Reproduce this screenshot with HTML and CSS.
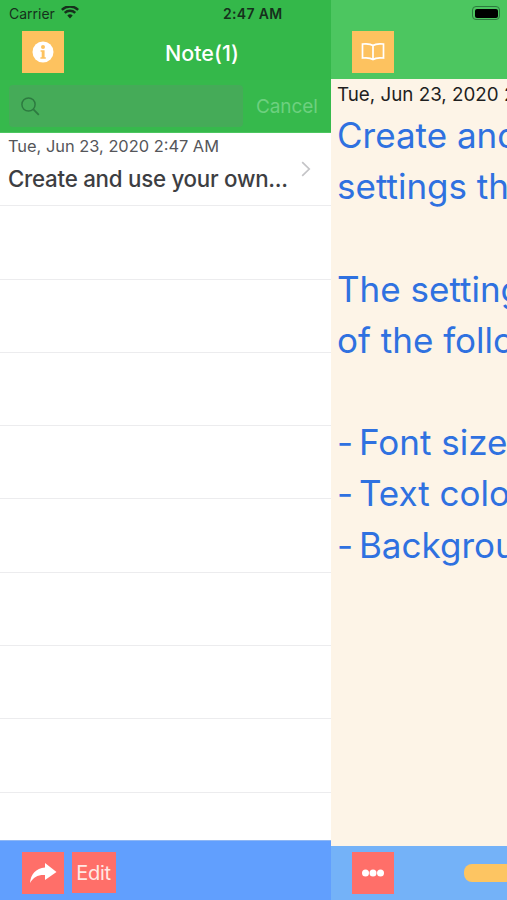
FILE: index.html
```html
<!DOCTYPE html>
<html lang="en">
<head>
<meta charset="utf-8">
<title>Note</title>
<link rel="stylesheet" href="styles.css">
</head>
<body>
<div class="screen">
  <section class="master">
    <header class="nav">
      <div class="status">
        <span class="carrier">Carrier</span>
        <svg class="wifi" viewBox="0 0 18 13" width="18" height="13"><path d="M9 12.6 6.3 9.6a3.9 3.9 0 0 1 5.4 0zM4.6 7.8 2.9 6a8.8 8.8 0 0 1 12.2 0l-1.7 1.8a6.4 6.4 0 0 0-8.8 0zM1.7 4.7 0 2.9a13 13 0 0 1 18 0l-1.7 1.8a10.6 10.6 0 0 0-14.6 0z" fill="#16301c"/></svg>
        <span class="clock">2:47 AM</span>
      </div>
      <div class="navbar">
        <button class="square amber">
          <svg viewBox="0 0 22 22" width="22" height="22"><circle cx="11" cy="11" r="10.5" fill="#fff"/><circle cx="11" cy="6" r="2" fill="#fdc25f"/><path d="M8.6 9.2h4v7h1.2v1.6H8.4v-1.6h1.3v-5.4H8.6z" fill="#fdc25f"/></svg>
        </button>
        <h1 class="title">Note(1)</h1>
      </div>
    </header>
    <div class="search">
      <div class="field">
        <svg viewBox="0 0 20 20" width="20" height="20"><circle cx="8.5" cy="8.5" r="6.6" fill="none" stroke="#2d7a40" stroke-width="1.5"/><path d="m13.4 13.4 5.4 5.4" stroke="#2d7a40" stroke-width="1.8" fill="none"/></svg>
      </div>
      <span class="cancel">Cancel</span>
    </div>
    <ul class="list">
      <li class="row">
        <div class="row-text">
          <div class="row-date">Tue, Jun 23, 2020 2:47 AM</div>
          <div class="row-title">Create and use your own...</div>
        </div>
        <svg class="chevron" viewBox="0 0 10 16" width="10" height="16"><path d="m1.2 1.2 7 6.8-7 6.8" fill="none" stroke="#c4c4c7" stroke-width="1.7"/></svg>
      </li>
      <li class="row"></li>
      <li class="row"></li>
      <li class="row"></li>
      <li class="row"></li>
      <li class="row"></li>
      <li class="row"></li>
      <li class="row"></li>
      <li class="row"></li>
    </ul>
    <footer class="toolbar">
      <button class="square coral">
        <svg viewBox="0 0 28 22" width="28" height="22"><path d="M16 1 27.5 10 16 18v-5C9 12.6 4.5 15 1 21c.6-9 6-14.6 15-15.600z" fill="#fff"/></svg>
      </button>
      <button class="edit">Edit</button>
    </footer>
  </section>
  <section class="detail">
    <header class="detail-nav">
      <div class="battery-line">
        <span class="battery"><span class="battery-fill"></span></span>
      </div>
      <div class="navbar navbar-detail">
        <button class="square amber">
          <svg viewBox="0 0 24 20" width="24" height="20"><path d="M12 3.500C10 2 6 1.500 1.500 2v14c4.500-.5 8.500 0 10.500 1.500 2-1.500 6-2 10.500-1.500V2C18 1.500 14 2 12 3.500zM12 3.500v14" fill="none" stroke="#fff" stroke-width="1.700"/></svg>
        </button>
      </div>
    </header>
    <article class="note">
      <div class="note-date">Tue, Jun 23, 2020 2:47 AM</div>
      <p class="note-body">Create and use your own
settings that suit you.

The settings consist
of the following items.

<span class="dash">-</span> Font size
<span class="dash">-</span> Text color
<span class="dash">-</span> Background color</p>
    </article>
    <footer class="detail-bar">
      <button class="square coral">
        <svg viewBox="0 0 24 8" width="24" height="8"><circle cx="4.500" cy="4" r="3.500" fill="#fff"/><circle cx="12" cy="4" r="3.500" fill="#fff"/><circle cx="19.500" cy="4" r="3.500" fill="#fff"/></svg>
      </button>
      <span class="pill"></span>
    </footer>
  </section>
</div>
</body>
</html>
```
FILE: styles.css
```css
* { box-sizing: border-box; }
html, body { margin: 0; padding: 0; }
body { font-family: "Inter", "Liberation Sans", sans-serif; background: #fff; }
button { border: 0; padding: 0; font: inherit; }
.screen { display: flex; width: 507px; height: 900px; overflow: hidden; }

.master { flex: 0 0 331px; display: flex; flex-direction: column; height: 900px; background: #fff; }
.nav { height: 80px; background: #34b84a; }
.status { height: 31px; padding: 5px 0 0 9px; display: flex; align-items: flex-start; color: #16301c; line-height: 17px; }
.carrier { font-size: 14px; }
.wifi { margin: 1px 0 0 6px; }
.clock { margin-left: 144px; font-weight: 600; font-size: 14px; letter-spacing: .35px; }
.navbar { height: 42px; padding-left: 22px; display: flex; align-items: center; position: relative; }
.navbar-detail { padding-left: 21px; }
.square { flex: none; width: 41.500px; height: 42px; display: flex; align-items: center; justify-content: center; }
.amber { background: #fdc25f; }
.coral { background: #ff6f69; }
.title { position: absolute; left: 165px; top: 0; margin: 0; color: #fff; font-size: 21.500px; font-weight: 500; line-height: 44px; }

.search { height: 53px; background: #36b94c; display: flex; align-items: center; padding: 0 11px 0 9px; border-bottom: 1px solid #4cc660; }
.field { width: 234px; height: 42px; background: #45ab58; border-radius: 4px; padding: 11px 0 0 11px; }
.cancel { margin-left: 13px; color: #6dd07f; font-size: 19px; letter-spacing: -.1px; }

.list { list-style: none; margin: 0; padding: 0; flex: 1; overflow: hidden; }
.row { height: 73.300px; border-bottom: 1px solid #ececee; display: flex; align-items: flex-start; padding: 0 20px 0 8px; }
.row-text { flex: 1; min-width: 0; }
.row-date { font-size: 16.400px; line-height: 20px; color: #55565a; margin-top: 3px; }
.row-title { font-size: 22.300px; line-height: 26px; color: #3d3e42; margin-top: 10px; font-weight: 450; letter-spacing: -.25px; white-space: nowrap; }
.chevron { margin-top: 28px; flex: none; margin-left: -1px; }

.toolbar { height: 60px; background: #619ffe; padding: 11px 0 0 22px; display: flex; gap: 8px; align-items: flex-start; border-top: 1px solid #8eb7f5; }
.edit { width: 44px; height: 41px; background: #ff6f69; color: #ffe9e4; font-size: 20px; letter-spacing: -.3px; }

.detail { flex: 1; min-width: 0; display: flex; flex-direction: column; overflow: hidden; }
.detail-nav { height: 79px; background: #4cc660; }
.battery-line { height: 31px; padding: 6px 0 0 141px; }
.battery { display: block; width: 28px; height: 14px; border: 1.500px solid #2c7a3e; border-radius: 4px; padding: 1.500px; }
.battery-fill { display: block; width: 100%; height: 100%; background: #000; border-radius: 2px; }
.note { flex: 1; min-height: 0; background: #fdf4e7; padding: 5px 0 0 6px; overflow: hidden; }
.note-date { font-size: 18.800px; line-height: 22px; color: #1f1f1f; white-space: nowrap; }
.note-body { margin: 4px 0 0; font-size: 35px; line-height: 51.200px; color: #2f71e0; white-space: pre; }
.dash { letter-spacing: -4px; }
.detail-bar { height: 54px; background: #74b2f8; padding: 6px 0 0 21px; display: flex; align-items: flex-start; }
.pill { width: 60px; height: 18px; margin: 12px 0 0 70.500px; background: #fdc562; border-radius: 8px 0 0 8px; flex: none; }
```
